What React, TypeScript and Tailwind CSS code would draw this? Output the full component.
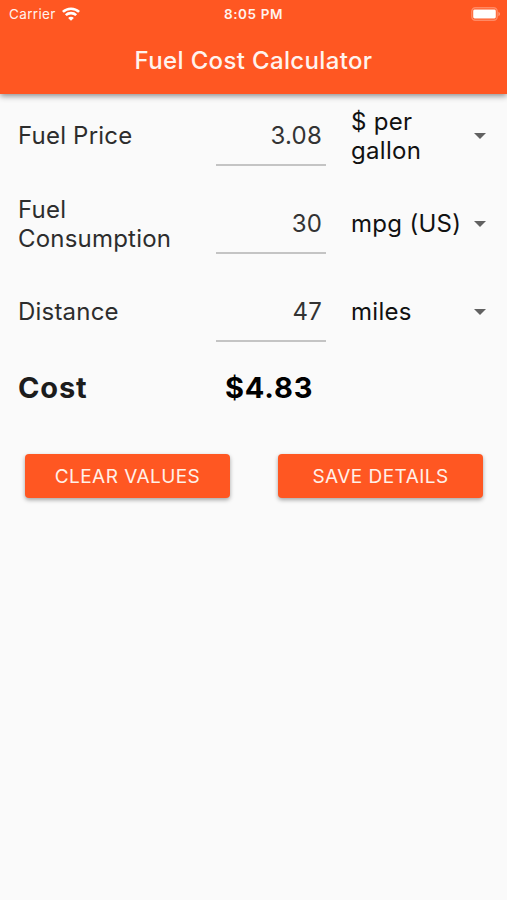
const rows = [
    { label: 'Fuel Price', value: '3.08', unit: '$ per gallon' },
    { label: 'Fuel Consumption', value: '30', unit: 'mpg (US)' },
    { label: 'Distance', value: '47', unit: 'miles' },
]

const WifiIcon = () => (
    <svg className="ml-[6px] h-[14px] w-[18px]" viewBox="0 0 18 14" fill="none" stroke="#fff" strokeWidth="2.6">
        <path d="M0.9 4.9C5.3 0.6 12.7 0.6 17.1 4.9" />
        <path d="M3.8 8.1C6.7 5.4 11.3 5.4 14.2 8.1" />
        <path d="M9 13.8L6.1 10.9C7.7 9.4 10.3 9.4 11.9 10.9Z" fill="#fff" stroke="none" />
    </svg>
)

const BatteryIcon = () => (
    <svg className="h-[14px] w-[30px]" viewBox="0 0 30 14">
        <rect x="0.8" y="0.8" width="25.4" height="12.4" rx="3.6" fill="none" stroke="#fff" strokeOpacity="0.3" strokeWidth="1.4" />
        <rect x="2.2" y="2.5" width="22.6" height="9" rx="1.4" fill="#fff" />
        <path d="M27.4 4.8C29.5 5.6 29.5 8.4 27.4 9.2Z" fill="#fff" fillOpacity="0.4" />
    </svg>
)

const Header = () => (
    <header className="h-[94px] bg-[#ff5722] text-[#fff3ee] shadow-[0_2px_6px_rgba(0,0,0,0.45)]">
        <div className="grid h-[27px] grid-cols-3 items-center text-[13.5px]">
            <div className="flex items-center pl-[9px]">
                <span className="pt-px tracking-[0.35px]">Carrier</span>
                <WifiIcon />
            </div>
            <span className="pt-px text-center font-semibold tracking-[0.6px]">8:05 PM</span>
            <div className="flex justify-end pr-[6px]">
                <BatteryIcon />
            </div>
        </div>
        <h1 className="h-[66px] text-center text-[24px] leading-[67px] font-medium tracking-[0.35px]">Fuel Cost Calculator</h1>
    </header>
)

const Row = ({ label, value, unit }: { label: string; value: string; unit: string }) => (
    <div className="flex h-[73px] items-center text-[24px] leading-[29px] tracking-[0.2px]">
        <div className="w-[198px] pr-6 text-[#2d2d2d]">{label}</div>
        <div className="h-[60px] w-[110px] border-b-2 border-[#c4c4c4] pr-[4px] text-right leading-[60px] text-[#333]">
            {value}
        </div>
        <div className="ml-[25px] flex flex-1 items-center justify-between tracking-[0.3px] text-[#111]">
            <span className="max-w-[114px]">{unit}</span>
            <svg className="mr-[21px] h-[6px] w-[12px] shrink-0" viewBox="0 0 12 6">
                <path d="M0 0H12L6 6Z" fill="#616161" />
            </svg>
        </div>
    </div>
)

const Button = ({ children }: { children: string }) => (
    <button className="h-[44px] w-[205px] rounded-[4px] bg-[#ff5722] pt-[2px] text-[19px] tracking-[0.45px] text-[#fff0e8] shadow-[0_2px_4px_rgba(0,0,0,0.35)]">
        {children}
    </button>
)

const App = () => {
    return (
        <div className="h-[900px] w-[507px] overflow-hidden bg-[#fafafa] font-['Inter',sans-serif]">
            <Header />
            <main className="pt-[5px] pl-[18px]">
                <div className="flex flex-col gap-[15px]">
                    {rows.map((row) => (
                        <Row key={row.label} {...row} />
                    ))}
                </div>
                <div className="mt-[22px] flex h-[36px] items-center text-[29px] font-bold tracking-[0.85px]">
                    <span className="w-[207px] text-[#1c1c1c]">Cost</span>
                    <span className="text-black">$4.83</span>
                </div>
                <div className="mt-[48px] ml-[7px] flex gap-[48px]">
                    <Button>CLEAR VALUES</Button>
                    <Button>SAVE DETAILS</Button>
                </div>
            </main>
        </div>
    )
}

export default App
